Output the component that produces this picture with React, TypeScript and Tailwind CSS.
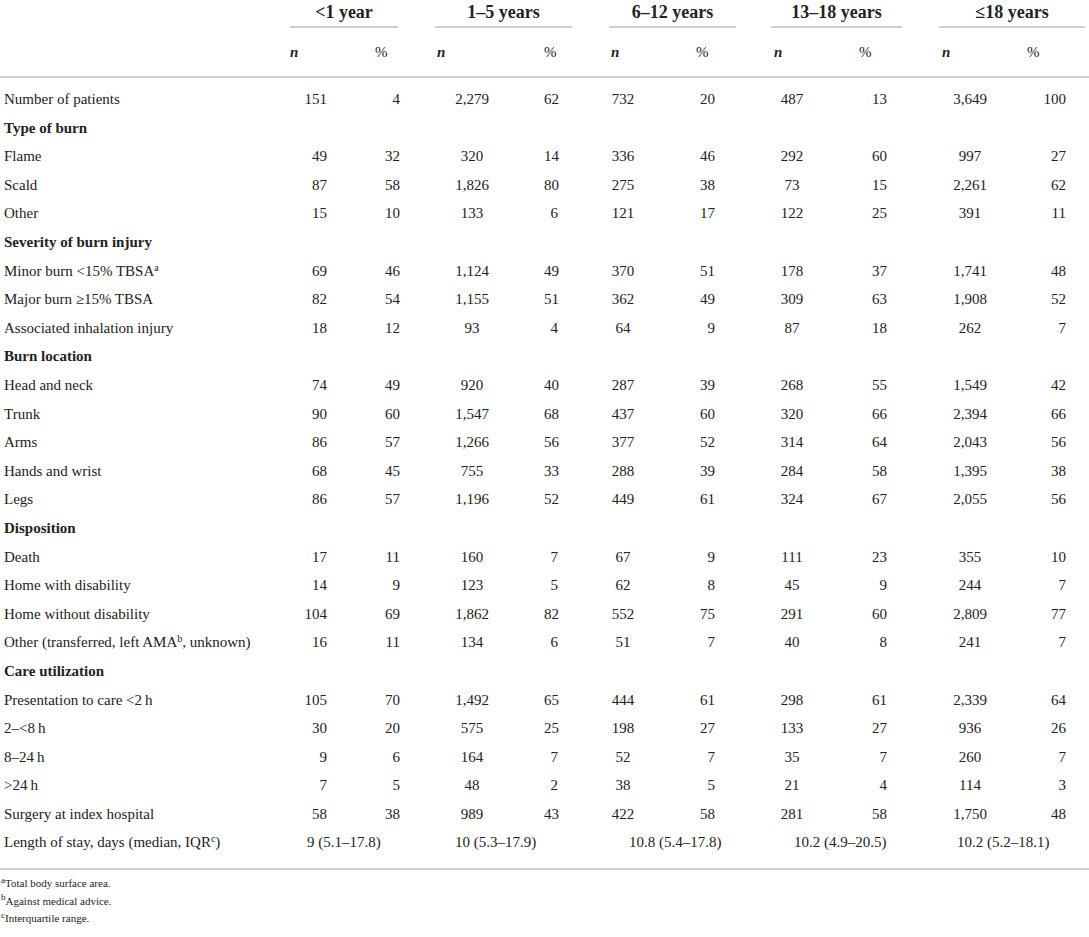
const cols = "grid grid-cols-[290px_85px_60px_109px_65px_87px_75px_88px_80px_88px_62px]";

const groups = [
  { label: "<1 year", cls: "mr-[37px]" },
  { label: "1–5 years", cls: "mr-[37px]" },
  { label: "6–12 years", cls: "mr-[35px]" },
  { label: "13–18 years", cls: "mr-[37px]" },
  { label: "≤18 years", cls: "mr-[4px]" },
];

const headCls = ["pl-0", "pl-0", "pl-[2px]", "pl-0", "pl-[2px]", "pl-0", "pl-[3px]", "pl-0", "pl-[3px]", "pl-0"];

const dataCls = [
  "text-right pr-[48px]",
  "text-right pr-[35px]",
  "text-center pr-[35px]",
  "text-right pr-[51px]",
  "text-center pr-[59px]",
  "text-right pr-[56px]",
  "text-center pr-[46px]",
  "text-right pr-[52px]",
  "text-center pr-[26px]",
  "text-right pr-[23px]",
];

const stayCls = ["pl-[17px]", "pl-[20px]", "pl-[20px]", "pl-[23px]", "pl-[18px]"];

type Row = { section?: string; label?: React.ReactNode; v?: string[] };

const rows: Row[] = [
  { label: "Number of patients", v: ["151", "4", "2,279", "62", "732", "20", "487", "13", "3,649", "100"] },
  { section: "Type of burn" },
  { label: "Flame", v: ["49", "32", "320", "14", "336", "46", "292", "60", "997", "27"] },
  { label: "Scald", v: ["87", "58", "1,826", "80", "275", "38", "73", "15", "2,261", "62"] },
  { label: "Other", v: ["15", "10", "133", "6", "121", "17", "122", "25", "391", "11"] },
  { section: "Severity of burn injury" },
  { label: <>Minor burn &lt;15% TBSA<sup className="text-[10px]">a</sup></>, v: ["69", "46", "1,124", "49", "370", "51", "178", "37", "1,741", "48"] },
  { label: "Major burn ≥15% TBSA", v: ["82", "54", "1,155", "51", "362", "49", "309", "63", "1,908", "52"] },
  { label: "Associated inhalation injury", v: ["18", "12", "93", "4", "64", "9", "87", "18", "262", "7"] },
  { section: "Burn location" },
  { label: "Head and neck", v: ["74", "49", "920", "40", "287", "39", "268", "55", "1,549", "42"] },
  { label: "Trunk", v: ["90", "60", "1,547", "68", "437", "60", "320", "66", "2,394", "66"] },
  { label: "Arms", v: ["86", "57", "1,266", "56", "377", "52", "314", "64", "2,043", "56"] },
  { label: "Hands and wrist", v: ["68", "45", "755", "33", "288", "39", "284", "58", "1,395", "38"] },
  { label: "Legs", v: ["86", "57", "1,196", "52", "449", "61", "324", "67", "2,055", "56"] },
  { section: "Disposition" },
  { label: "Death", v: ["17", "11", "160", "7", "67", "9", "111", "23", "355", "10"] },
  { label: "Home with disability", v: ["14", "9", "123", "5", "62", "8", "45", "9", "244", "7"] },
  { label: "Home without disability", v: ["104", "69", "1,862", "82", "552", "75", "291", "60", "2,809", "77"] },
  { label: <>Other (transferred, left AMA<sup className="text-[10px]">b</sup>, unknown)</>, v: ["16", "11", "134", "6", "51", "7", "40", "8", "241", "7"] },
  { section: "Care utilization" },
  { label: "Presentation to care <2\u2009h", v: ["105", "70", "1,492", "65", "444", "61", "298", "61", "2,339", "64"] },
  { label: "2–<8\u2009h", v: ["30", "20", "575", "25", "198", "27", "133", "27", "936", "26"] },
  { label: "8–24\u2009h", v: ["9", "6", "164", "7", "52", "7", "35", "7", "260", "7"] },
  { label: ">24\u2009h", v: ["7", "5", "48", "2", "38", "5", "21", "4", "114", "3"] },
  { label: "Surgery at index hospital", v: ["58", "38", "989", "43", "422", "58", "281", "58", "1,750", "48"] },
];

const stay = ["9 (5.1–17.8)", "10 (5.3–17.9)", "10.8 (5.4–17.8)", "10.2 (4.9–20.5)", "10.2 (5.2–18.1)"];

export default function App() {
  return (
    <div className="w-[1089px] h-[937px] bg-white text-[#222] font-['Liberation_Serif',serif] text-[15px]">
      {/* header */}
      <div className={`${cols} border-b-2 border-[#cfcfcf]`}>
        <div className="h-[28px]" />
        {groups.map((g) => (
          <div key={g.label} className="col-span-2 h-[28px]">
            <div className={`h-[28px] border-b-2 border-[#cfcfcf] text-center text-[18px] font-bold leading-[24px] ${g.cls}`}>{g.label}</div>
          </div>
        ))}
        <div className="h-[48px]" />
        {headCls.map((c, i) => (
          <div key={i} className={`h-[48px] flex items-center ${c}`}>
            {i % 2 === 0 ? <span className="font-bold italic">n</span> : <span>%</span>}
          </div>
        ))}
      </div>

      {/* body */}
      <div className={`${cols} auto-rows-[28.6px] items-center pt-[7px] pb-[11px] border-b-2 border-[#cfcfcf]`}>
        {rows.map((r, ri) =>
          r.section ? (
            <div key={ri} className="col-span-11 pl-[4px] font-bold">{r.section}</div>
          ) : (
            <>
              <div key={`l${ri}`} className="pl-[4px] whitespace-nowrap">{r.label}</div>
              {r.v!.map((v, i) => (
                <div key={`${ri}-${i}`} className={dataCls[i]}>{v}</div>
              ))}
            </>
          )
        )}
        <div className="pl-[4px] whitespace-nowrap">
          Length of stay, days (median, IQR<sup className="text-[10px]">c</sup>)
        </div>
        {stay.map((s, i) => (
          <div key={s + i} className={`col-span-2 whitespace-nowrap ${stayCls[i]}`}>{s}</div>
        ))}
      </div>

      {/* footnotes */}
      <div className="pt-[5px] pl-[1px] text-[11px] leading-[17.5px]">
        <div><sup className="text-[9px]">a</sup>Total body surface area.</div>
        <div><sup className="text-[9px]">b</sup>Against medical advice.</div>
        <div><sup className="text-[9px]">c</sup>Interquartile range.</div>
      </div>
    </div>
  );
}
